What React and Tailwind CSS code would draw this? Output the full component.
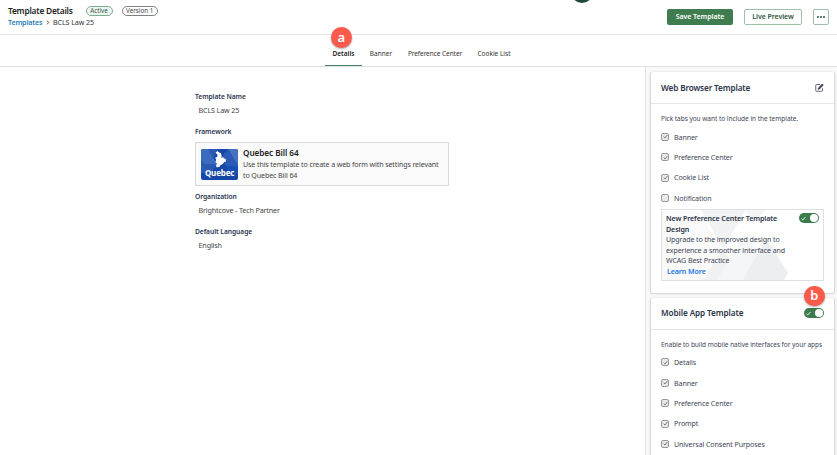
import React from "react";

function Check({ on = true }) {
  return (
    <span className="flex h-[8px] w-[8px] shrink-0 items-center justify-center rounded-[2px] border border-[#97999d] bg-[#e9e9ea]">
      {on && (
        <svg viewBox="0 0 10 10" className="h-[5px] w-[5px]" fill="none" stroke="#5d6066" strokeWidth="1.6">
          <path d="M1.2 5.4 4 8 8.8 2" />
        </svg>
      )}
    </span>
  );
}

function Option({ label, on }) {
  return (
    <div className="flex h-[20.45px] items-center gap-[5px]">
      <Check on={on} />
      <span className="pt-[0.4px] text-[7.1px] tracking-[-0.1px]">{label}</span>
    </div>
  );
}

function Toggle() {
  return (
    <span className="flex h-[10px] w-[20px] shrink-0 items-center justify-between rounded-full bg-[#3c7b4b] pr-[1px] pl-[2px]">
      <svg viewBox="0 0 10 10" className="h-[5px] w-[5px]" fill="none" stroke="#fff" strokeWidth="1.7">
        <path d="M1 5.5 3.7 8 9 1.8" />
      </svg>
      <span className="h-[8px] w-[8px] rounded-full bg-white" />
    </span>
  );
}

function Marker({ children, className }) {
  return (
    <span
      className={`absolute flex h-[20.5px] w-[20.5px] items-center justify-center rounded-full bg-[#fc5b4c] text-[13px] leading-none font-semibold text-white shadow-[0_1px_2px_rgba(0,0,0,0.35)] ${className}`}
    >
      {children}
    </span>
  );
}

function QuebecLogo() {
  return (
    <svg viewBox="0 0 37 31" className="h-[31px] w-[37px] shrink-0">
      <clipPath id="logo">
        <rect width="37" height="31" rx="2" />
      </clipPath>
      <g clipPath="url(#logo)">
        <rect width="37" height="31" fill="#1747a6" />
        <path d="M0 0h7l9 15H0z" fill="#3d6bbd" />
        <path d="M0 10 8 24H0z" fill="#2c5ab3" />
        <path d="M7 0h11l-6 9zM16 15l-8 12-8-12z" fill="#2a59b4" />
        <path d="M37 0v17L27 0z" fill="#4571c0" />
        <path d="M27 0 37 17H25l-5-8z" fill="#2a5ab5" />
        <path d="M25 17h12v8h-8z" fill="#174fb4" />
        <path d="M14.600 3.800 16.500 1.900l1.600 1.500 1.700.7.900 2.600-.3 2.500 1.900-1.300.5 1.400 1.900.7.300 2.500-2 .6-1.100 2-2.300 1-1.300 2-2.700.2-.6-1.800.9-1.900-1.500-1.600.9-2.500-1.300-1.800 2.100-.7.400-2.200z" fill="#fff" />
        <text x="18.7" y="27" textAnchor="middle" textLength="29.5" fontFamily="Noto Sans, sans-serif" fontSize="8" fontWeight="700" fill="#fff">
          Quebec
        </text>
      </g>
    </svg>
  );
}

function Field({ label, children, className = "" }) {
  return (
    <div className={className}>
      <div className="h-[10px] text-[6.7px] leading-[10px] font-semibold tracking-[-0.06px] text-[#2c3550]">{label}</div>
      <div className="mt-[3px] h-[10px] pl-[3.5px] text-[7.2px] leading-[10px] tracking-[-0.15px] text-[#444]">{children}</div>
    </div>
  );
}

export default function App() {
  return (
    <div className="relative flex h-[455px] w-[837px] flex-col overflow-hidden bg-white font-['Noto_Sans',sans-serif] text-[7px] text-[#333]">
      <span className="absolute -top-[19px] left-[571px] h-[22px] w-[22px] rounded-full bg-[#1f4a35]" />
      <header className="flex h-[35px] shrink-0 justify-between border-b border-[#e6e6e6] pr-[8px] pl-[8px]">
        <div className="pt-[5px] whitespace-nowrap">
          <div className="flex h-[12px] items-center">
            <h1 className="w-[77.5px] pt-px text-[8.4px] font-semibold tracking-[-0.23px] text-[#222]">Template Details</h1>
            <span className="flex h-[10px] w-[27px] items-center justify-center rounded-full border border-[#7bae91] bg-[#ecf7f1] text-[6.3px] text-[#3f5a4c]">Active</span>
            <span className="ml-[9px] flex h-[10px] w-[36.5px] items-center justify-center rounded-full border border-[#808080] text-[6.3px] text-[#444]">Version 1</span>
          </div>
          <div className="flex h-[12px] items-center pb-px text-[7.1px] tracking-[-0.08px]">
            <a className="w-[38px] font-semibold tracking-[-0.13px] text-[#2b7cb8]">Templates</a>
            <svg viewBox="0 0 4 6" className="mr-[3px] h-[5px] w-[4px]" fill="none" stroke="#333" strokeWidth="1">
              <path d="m.8.8 2 2.2-2 2.2" />
            </svg>
            <span>BCLS Law 25</span>
          </div>
        </div>
        <div className="flex gap-[11px] pt-[9px] text-[7px] font-semibold whitespace-nowrap">
          <button className="h-[16px] w-[66px] rounded-[2px] bg-[#3f7d50] tracking-[-0.07px] text-white">Save Template</button>
          <button className="h-[16px] w-[58px] rounded-[2px] border border-[#9dbfab] tracking-[-0.07px] text-[#2c5542]">Live Preview</button>
          <button className="flex h-[16px] w-[16px] items-center justify-center gap-[1.3px] rounded-[2px] border border-[#9dbfab]">
            <span className="h-[2px] w-[2px] rounded-full bg-[#2c5542]" />
            <span className="h-[2px] w-[2px] rounded-full bg-[#2c5542]" />
            <span className="h-[2px] w-[2px] rounded-full bg-[#2c5542]" />
          </button>
        </div>
      </header>

      <nav className="flex h-[32px] shrink-0 border-b border-[#e0e0e0] pl-[325px] text-[6.5px] leading-[37px] whitespace-nowrap">
        <span className="relative h-[31px] w-[37px] border-b border-[#4e7f60] text-center font-semibold text-[#222]">
          Details
          <Marker className="-top-[8px] left-[6px]">a</Marker>
        </span>
        <span className="w-[38px] text-center">Banner</span>
        <span className="w-[70px] text-center tracking-[-0.06px]">Preference Center</span>
        <span className="w-[48px] text-center">Cookie List</span>
      </nav>

      <div className="flex min-h-0 flex-1">
        <main className="w-[645px] shrink-0 pt-[25px] pl-[195px] whitespace-nowrap">
          <Field label="Template Name">BCLS Law 25</Field>
          <div className="mt-[12px] h-[10px] text-[6.7px] leading-[10px] font-semibold tracking-[-0.06px] text-[#2c3550]">Framework</div>
          <div className="mt-[5px] flex h-[44px] w-[254px] border border-[#d9d9d9] bg-[#fafafa] pt-[6px] pl-[5px]">
            <QuebecLogo />
            <div className="ml-[5px] text-[7.1px] leading-[10.5px] tracking-[-0.12px] text-[#444]">
              <div className="-mt-px h-[11px] text-[8.2px] leading-[10px] font-semibold tracking-[-0.06px] text-[#222]">Quebec Bill 64</div>
              <p>Use this template to create a web form with settings relevant</p>
              <p>to Quebec Bill 64</p>
            </div>
          </div>
          <Field label="Organization" className="mt-[5.6px]">Brightcove - Tech Partner</Field>
          <Field label="Default Language" className="mt-[12px]">English</Field>
        </main>

        <aside className="flex flex-1 flex-col gap-[5px] overflow-hidden border-l border-[#e2e2e2] bg-[#f9f9f9] pt-[5px] pr-[3px] pl-[5px] whitespace-nowrap text-[#3d4658]">
          <section className="h-[221px] shrink-0 rounded-[2px] bg-white shadow-[0_0.5px_2px_0.5px_rgba(0,0,0,0.17)]">
            <div className="flex h-[32px] items-center justify-between border-b border-[#e5e5e5] pr-[10px] pl-[10px]">
              <h2 className="pt-px text-[8.2px] font-semibold tracking-[-0.13px] text-[#2c3448]">Web Browser Template</h2>
              <svg viewBox="0 0 18 18" className="h-[9px] w-[9px]" fill="none" stroke="#333c4d" strokeWidth="1.500">
                <path d="M10 3H3a1.500 1.500 0 0 0-1.500 1.500v10.500A1.500 1.500 0 0 0 3 16.500h10.500A1.500 1.500 0 0 0 15 15v-4.500" />
                <path d="M7 10 14.500 2l2 2L9 12l-3 .7z" fill="#333c4d" />
              </svg>
            </div>
            <div className="pl-[10px]">
              <p className="mt-[10.400px] mb-[2.100px] h-[10px] text-[6.500px] leading-[10px] tracking-[-0.03px]">Pick tabs you want to include in the template.</p>
              <Option label="Banner" on />
              <Option label="Preference Center" on />
              <Option label="Cookie List" on />
              <Option label="Notification" on={false} />
              <div className="relative mt-[1px] flex h-[72px] w-[163px] justify-between border border-[#e0e0e0] bg-white pt-[3px] pr-[4px] pl-[4px]">
                <svg viewBox="0 0 161 70" className="absolute inset-0 h-full w-full" preserveAspectRatio="none">
                  <path d="M0 0h35l25 39-20 31H0z" fill="#fafafb" />
                  <path d="M39 0h45L61 38z" fill="#f1f2f3" />
                  <path d="M83 0h20l-12 14z" fill="#f4f5f6" />
                  <path d="m61 38 20 32H41z" fill="#f0f1f3" />
                  <path d="M83 24 106 62l-5 8H55z" fill="#f5f6f7" />
                  <path d="m104 28 22 35-4 7H81z" fill="#eceef0" />
                </svg>
                <div className="relative text-[7.100px] leading-[10.500px] tracking-[-0.1px]">
                  <p className="font-semibold tracking-[-0.1px] text-[#2c3448]">New Preference Center Template</p>
                  <p className="font-semibold text-[#2c3448]">Design</p>
                  <p>Upgrade to the improved design to</p>
                  <p>experience a smoother interface and</p>
                  <p>WCAG Best Practice</p>
                  <a className="pl-px font-semibold text-[#1a76e8]">Learn More</a>
                </div>
                <span className="relative"><Toggle /></span>
              </div>
            </div>
          </section>

          <section className="relative h-[180px] shrink-0 rounded-[2px] bg-white shadow-[0_0.5px_2px_0.5px_rgba(0,0,0,0.17)]">
            <Marker className="-top-[12.500px] right-[9.500px]">b</Marker>
            <div className="flex h-[32px] items-center justify-between border-b border-[#e5e5e5] pr-[10px] pb-px pl-[10px]">
              <h2 className="text-[8.2px] font-semibold tracking-[-0.1px] text-[#2c3448]">Mobile App Template</h2>
              <Toggle />
            </div>
            <div className="pl-[10px]">
              <p className="mt-[10px] mb-[2px] h-[10px] text-[6.500px] leading-[10px] tracking-[-0.04px]">Enable to build mobile native interfaces for your apps</p>
              <Option label="Details" on />
              <Option label="Banner" on />
              <Option label="Preference Center" on />
              <Option label="Prompt" on />
              <Option label="Universal Consent Purposes" on />
            </div>
          </section>
        </aside>
      </div>
    </div>
  );
}
